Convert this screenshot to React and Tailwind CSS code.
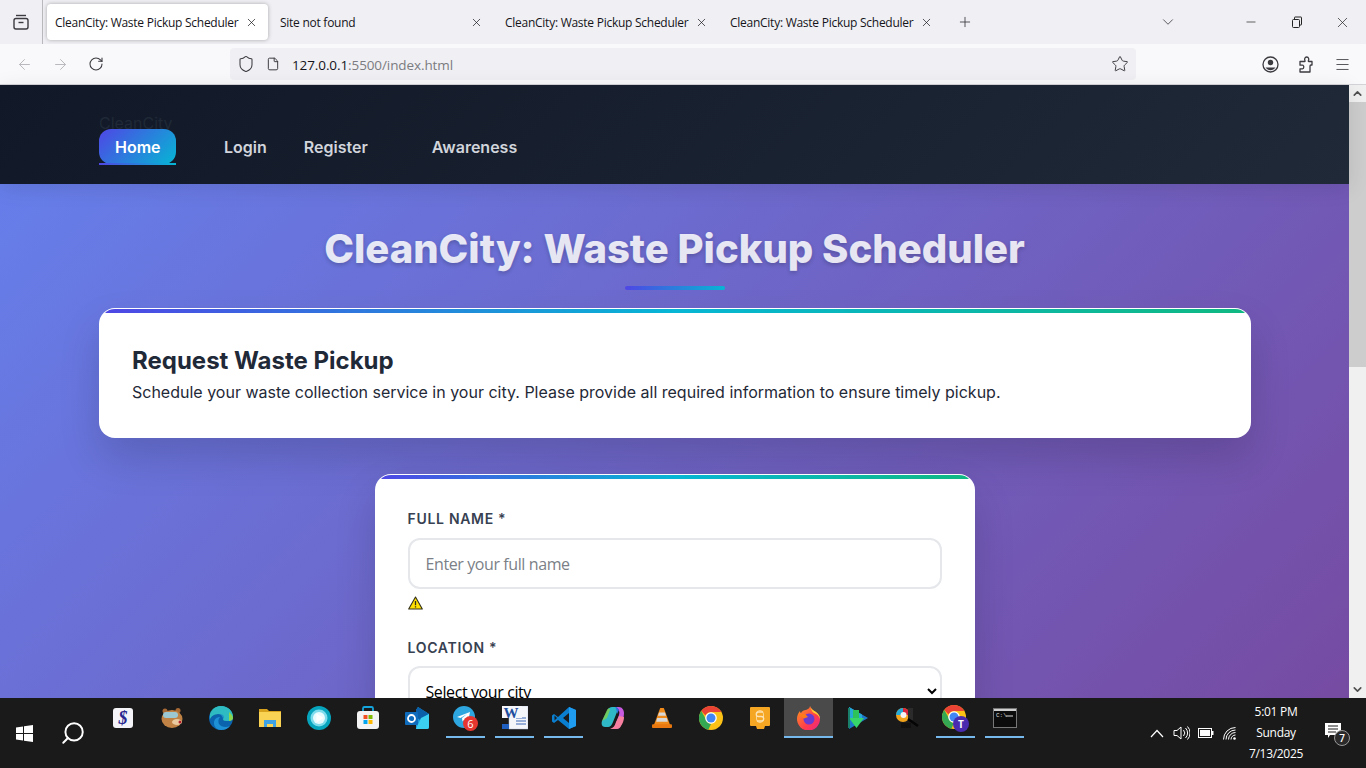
import React from "react";
import {
  ArrowLeft,
  ArrowRight,
  RotateCw,
  Shield,
  File,
  Star,
  Menu,
  X,
  Plus,
  ChevronDown,
  ChevronUp,
  Minus,
  Search,
} from "lucide-react";

const tabs = [
  { title: "CleanCity: Waste Pickup Scheduler", active: true },
  { title: "Site not found" },
  { title: "CleanCity: Waste Pickup Scheduler" },
  { title: "CleanCity: Waste Pickup Scheduler" },
];

const Tab = ({ title, active }) => (
  <div
    className={`mx-[2px] flex h-9 w-[221px] items-center justify-between rounded pl-2 pr-[10px] text-xs tracking-[-0.26px] text-[#15141a] ${
      active ? "bg-white shadow-[0_0_4px_rgba(0,0,0,0.3)]" : ""
    }`}
  >
    <span className="whitespace-nowrap pt-px">{title}</span>
    <X size={13} strokeWidth={1.3} />
  </div>
);

const TabBar = () => (
  <div className="flex h-11 shrink-0 items-center bg-[#f0f0f4]">
    <div className="flex h-11 w-[43px] shrink-0 items-center justify-center border-r border-[#b8b8bd]">
      <svg width="18" height="18" viewBox="0 0 18 18" fill="none" stroke="#3b3b40" strokeWidth="1.4">
        <path d="M4 2.5h10" />
        <rect x="2" y="5.5" width="14" height="10.5" rx="2" />
        <path d="M6.5 9.5h5" />
      </svg>
    </div>
    <div className="ml-[2px] flex items-center">
      {tabs.map((t, i) => (
        <Tab key={i} title={t.title} active={t.active} />
      ))}
    </div>
    <Plus size={16} strokeWidth={1.3} className="ml-[12px] text-[#3b3b40]" />
    <ChevronDown size={18} strokeWidth={1.1} className="ml-[186px] text-[#3b3b40]" />
    <Minus size={14} strokeWidth={1.2} className="ml-[67px] text-[#222]" />
    <svg width="12" height="12" viewBox="0 0 12 12" fill="none" stroke="#222" className="ml-[33px]">
      <rect x="1.5" y="3.5" width="7" height="8" rx="1" />
      <path d="M3.5 3.5v-2a.5.5 0 0 1 .5-.5h6a.5.5 0 0 1 .5.5v7a.5.5 0 0 1-.5.5h-1.500" />
    </svg>
    <X size={17} strokeWidth={1} className="ml-[31px] text-[#222]" />
  </div>
);

const Toolbar = () => (
  <div className="flex h-[41px] shrink-0 items-center border-b border-[#d4d4d8] bg-[#f9f9fb]">
    <ArrowLeft size={17} strokeWidth={1.4} className="ml-4 text-[#b9b9bd]" />
    <ArrowRight size={17} strokeWidth={1.4} className="ml-[19px] text-[#b9b9bd]" />
    <RotateCw size={16} strokeWidth={1.6} className="ml-[19px] text-[#3b3b40]" />
    <div className="ml-[126px] flex h-8 w-[906px] items-center rounded bg-[#f0f0f4] pl-[7px] pr-[7px]">
      <Shield size={18} strokeWidth={1.4} className="text-[#3b3b40]" />
      <File size={14} strokeWidth={1.7} className="ml-[11px] text-[#3b3b40]" />
      <span className="ml-[12px] pt-[2px] text-[13.5px] tracking-[-0.1px] text-[#15141a]">
        127.0.0.1<span className="text-[#7b7b80]">:5500/index.html</span>
      </span>
      <Star size={18} strokeWidth={1.3} className="ml-auto text-[#3b3b40]" />
    </div>
    {/* account + puzzle are firefox's own shapes, lucide's don't match */}
    <svg width="17" height="17" viewBox="0 0 17 17" className="ml-[126px]">
      <circle cx="8.500" cy="8.500" r="7.500" fill="none" stroke="#3b3b40" strokeWidth="1.300" />
      <circle cx="8.500" cy="6.500" r="2.700" fill="#3b3b40" />
      <path d="M3.500 11.500h10a6 6 0 0 1-10 0Z" fill="#3b3b40" />
    </svg>
    <svg width="17" height="17" viewBox="0 0 17 17" fill="none" stroke="#3b3b40" strokeWidth="1.300" strokeLinejoin="round" className="ml-[19px]">
      <path d="M2 5.500h4.500c.7 0 .8-.6.4-1.200C6.400 3.500 6.500 1 8.700 1s2.300 2.500 1.800 3.300c-.4.600-.3 1.200.4 1.200H14V9h-1c-.8 0-1 .5-1 1v6H2v-3.200h2.500c1.700 0 1.700-3.600 0-3.600H2Z" />
    </svg>
    <Menu size={17} strokeWidth={1.2} className="ml-[19px] text-[#3b3b40]" />
  </div>
);

const Header = () => (
  <header className="relative z-10 flex h-[99px] shrink-0 flex-col bg-[linear-gradient(135deg,#111827,#1f2937)] px-[99px] pt-[28px] font-['Inter',sans-serif] shadow-[0_4px_20px_rgba(0,0,0,0.1)]">
    <div className="text-base font-normal leading-5 text-[#1f2937]">CleanCity</div>
    <nav className="-mt-1 flex items-center pt-0 text-base font-semibold text-[#d1d5db]">
      <a className="relative h-[35px] w-[77px] rounded-xl bg-[linear-gradient(135deg,#4f46e5,#06b6d4)] pl-4 pt-[7px] leading-[23px] text-white">
        Home
        <span className="absolute -bottom-px left-0 h-[2px] w-full bg-[linear-gradient(90deg,#4f46e5,#06b6d4)]" />
      </a>
      <a className="ml-8 px-4 pt-[2px] leading-[23px]">Login</a>
      <a className="ml-[5px] px-4 pt-[2px] leading-[23px]">Register</a>
      <a className="ml-8 px-4 pt-[2px] leading-[23px]">Awareness</a>
    </nav>
  </header>
);

const GradientBar = () => (
  <div className="h-1 shrink-0 bg-[linear-gradient(90deg,#4f46e5,#06b6d4,#10b981)]" />
);

const WarningIcon = () => (
  <svg width="15" height="14" viewBox="0 0 15 14">
    <path d="M7.500 1 14.300 13H.7Z" fill="#ffe000" stroke="#33301a" strokeWidth="1.100" strokeLinejoin="round" />
    <path d="M7.500 5v4.200M7.500 10.200v1.200" stroke="#33301a" strokeWidth="1.300" />
  </svg>
);

const Main = () => (
  <main className="min-h-0 flex-1 overflow-hidden bg-[linear-gradient(135deg,#667eea_0%,#764ba2_100%)] font-['Inter',sans-serif]">
    <h1 className="mt-10 text-center text-[40px] font-extrabold leading-[50px] text-white/85 [text-shadow:0_2px_4px_rgba(0,0,0,0.2)]">
      CleanCity: Waste Pickup Scheduler
    </h1>
    <div className="mx-auto mt-3 h-1 w-[100px] rounded bg-[linear-gradient(90deg,#4f46e5,#06b6d4)]" />

    <section className="ml-[99px] mt-[18px] flex h-[130px] w-[1152px] flex-col overflow-hidden rounded-2xl border border-white/90 bg-white shadow-[0_20px_40px_rgba(0,0,0,0.15)]">
      <GradientBar />
      <div className="px-8 pt-[33px]">
        <h2 className="text-2xl font-bold leading-[30px] text-[#1f2937]">Request Waste Pickup</h2>
        <p className="mt-1 text-base leading-[24px] text-[#1f2937]">
          Schedule your waste collection service in your city. Please provide all required information to ensure timely pickup.
        </p>
      </div>
    </section>

    <section className="mx-auto mt-9 flex w-[600px] flex-col overflow-hidden rounded-2xl border border-white/90 bg-white shadow-[0_20px_40px_rgba(0,0,0,0.15)]">
      <GradientBar />
      <form className="px-8 pt-[30px]">
        <label className="block text-sm font-semibold uppercase leading-[20px] tracking-[0.7px] text-[#374151]">
          Full Name *
        </label>
        <input
          readOnly
          placeholder="Enter your full name"
          className="mt-[9px] h-[51px] w-full rounded-xl border-2 border-[#e5e7eb] bg-white px-4 font-['Open_Sans',sans-serif] text-base tracking-[-0.4px] placeholder:text-[#7b7f87]"
        />
        <div className="mt-[7px] h-[14px]">
          <WarningIcon />
        </div>
        <label className="mt-[28px] block text-sm font-semibold uppercase leading-[20px] tracking-[0.7px] text-[#374151]">
          Location *
        </label>
        <select className="mt-2 h-[51px] w-full rounded-xl border-2 border-[#e5e7eb] bg-white pl-3 pr-1 font-['Open_Sans',sans-serif] text-base tracking-[-0.4px] text-black">
          <option>Select your city</option>
        </select>
      </form>
    </section>
  </main>
);

const Scrollbar = () => (
  <div className="flex w-[17px] shrink-0 flex-col bg-[#f0f0f0]">
    <div className="flex h-[17px] items-center justify-center text-[#505050]">
      <ChevronUp size={13} strokeWidth={3} />
    </div>
    <div className="h-[265px] bg-[#cdcdcd]" />
    <div className="mt-auto flex h-[17px] items-center justify-center text-[#505050]">
      <ChevronDown size={13} strokeWidth={3} />
    </div>
  </div>
);

// taskbar logos, all on a 24 box
const logos = {
  dollar: (
    <svg width="22" height="22" viewBox="0 0 22 22">
      <rect width="20" height="20" x="1" y="1" rx="3" fill="#f4f4f8" />
      <text x="11" y="17" textAnchor="middle" fontFamily="Liberation Serif, serif" fontStyle="italic" fontWeight="700" fontSize="18" fill="#27278f">$</text>
    </svg>
  ),
  bear: (
    <svg width="24" height="22" viewBox="0 0 24 22">
      <circle cx="5" cy="4" r="2.500" fill="#a86a35" />
      <circle cx="18" cy="3.500" r="2.500" fill="#a86a35" />
      <ellipse cx="12" cy="12" rx="10.500" ry="9" fill="#c08345" />
      <rect x="3" y="5" width="15" height="6" rx="3" fill="#9cc8d4" />
      <ellipse cx="17" cy="15" rx="5" ry="3" fill="#e8c9a0" />
      <circle cx="20" cy="15" r="1.500" fill="#b3202a" />
    </svg>
  ),
  edge: (
    <svg width="24" height="24" viewBox="0 0 24 24">
      <circle cx="12" cy="12" r="12" fill="#0c63ad" />
      <path d="M1 8C3 2 8 0 12 0c7 0 12 5 12 11 0 3-3 4-6 4-3 0-4-1-4-2 2-1 1-5-3-5C6 8 3 9 1 13Z" fill="#35c1a1" />
      <path d="M24 11c0 3-3 4-6 4-3 0-4-1-4-2 0-2-2-5-5-5C5 8 2 10 .5 13 1 5 6 0 12 0c7 0 12 5 12 11Z" fill="#2ab7d8" opacity=".6" />
      <path d="M12 24c4 0 7-1.500 9-4-4 2-9 1-11-2-1-2-1-5 1-7-3 0-6 2-6 6 0 4 3 7 7 7Z" fill="#1e90d6" />
      <path d="M20 6c2 2 4 4 4 6 0 2-2 3-4 3Z" fill="#8ad64f" />
    </svg>
  ),
  folder: (
    <svg width="22" height="20" viewBox="0 0 22 20">
      <path d="M0 1h8l2 2h12v16H0Z" fill="#d9a21c" />
      <rect y="4" width="22" height="15" fill="#fbd354" />
      <path d="M5 19v-7h12v7h-3v-3H8v3Z" fill="#3fa2e4" />
    </svg>
  ),
  circle: (
    <svg width="24" height="24" viewBox="0 0 24 24">
      <circle cx="12" cy="12" r="12" fill="#06a5bd" />
      <circle cx="12" cy="12" r="8.500" fill="#7fdced" />
      <circle cx="12" cy="12" r="6" fill="#e8fbff" />
      <path d="M9.500 7.500 16.500 12l-7 4.500Z" fill="#fff" />
    </svg>
  ),
  store: (
    <svg width="24" height="24" viewBox="0 0 24 24">
      <path d="M7 6V2.500A1.500 1.500 0 0 1 8.500 1h7A1.500 1.500 0 0 1 17 2.500V6" fill="none" stroke="#14a5dc" strokeWidth="1.800" />
      <rect x="1" y="5" width="22" height="18" rx="3" fill="#f3f3f3" />
      <rect x="7.500" y="9" width="4" height="4" fill="#f25022" />
      <rect x="12.500" y="9" width="4" height="4" fill="#7fba00" />
      <rect x="7.500" y="14" width="4" height="4" fill="#00a4ef" />
      <rect x="12.500" y="14" width="4" height="4" fill="#ffb900" />
    </svg>
  ),
  outlook: (
    <svg width="24" height="24" viewBox="0 0 24 24">
      <path d="M13 1 24 8v13a2 2 0 0 1-2 2H11V4Z" fill="#1a9bdc" />
      <path d="M13 1 24 8l-9 6-4-3V4Z" fill="#0a5fa8" />
      <path d="M24 8v13a2 2 0 0 1-2 2H11l5-11Z" fill="#3bd0f2" />
      <rect x="0" y="6" width="13" height="13" rx="1" fill="#0f6cbd" />
      <circle cx="6.500" cy="12.500" r="3.500" fill="none" stroke="#fff" strokeWidth="1.800" />
    </svg>
  ),
  telegram: (
    <svg width="25" height="25" viewBox="0 0 25 25">
      <circle cx="11" cy="11" r="11" fill="#2ea6e0" />
      <path d="M4 11 17 6l-2 10-3.500-2.500-2 2-.5-3.500L14 8l-6.500 4Z" fill="#fff" />
      <circle cx="17.500" cy="17.500" r="7.500" fill="#e7362f" />
      <text x="17.500" y="21.500" textAnchor="middle" fontFamily="Open Sans, sans-serif" fontSize="11" fill="#fff">6</text>
    </svg>
  ),
  word: (
    <svg width="26" height="24" viewBox="0 0 26 24">
      <rect x="7" y="0" width="19" height="23" fill="#f4f6fa" stroke="#b4c2dc" strokeWidth=".5" />
      <path d="M14 12h10M14 15h10M14 18h10" stroke="#3a68b5" />
      <rect x="0" y="0" width="20" height="12" fill="#f4f6fa" />
      <text x="9" y="12" textAnchor="middle" fontFamily="Liberation Serif, serif" fontWeight="700" fontSize="15" fill="#1f4e9e">W</text>
      <rect x="0" y="18" width="7" height="5" fill="#1f5fbf" />
    </svg>
  ),
  vscode: (
    <svg width="24" height="24" viewBox="0 0 24 24">
      <path d="M17 1 24 4v16l-7 3-11-9-4 3-2-1.500V9.500L2 8l4 3Z" fill="#0a7fd0" />
      <path d="M17 1 24 4v16l-7 3Z" fill="#1f9cf0" />
      <path d="M17 7v10l-6-5Z" fill="#1b1b1b" />
      <path d="M2.500 9.500 5 12l-2.500 2.500Z" fill="#1b1b1b" />
    </svg>
  ),
  copilot: (
    <svg width="24" height="24" viewBox="0 0 24 24">
      <path d="M7 3c1-1 2-2 4-2h4c2 0 2 3 1 5l-4 10c-1 3-3 5-5 5H4c-3 0-4-3-3-6Z" fill="#2fb8c6" />
      <path d="M1 15 6 4c1-2 3-2 3 0L6 12Z" fill="#7ed04b" opacity=".8" />
      <path d="M15 1h3c3 0 5 3 5 6s-1 8-3 12c-1 2-2 4-5 4h-5c3-1 4-3 5-6l3-8c1-3 0-6-3-8Z" fill="#c85ae0" />
      <path d="M9 23c3-1 5-3 6-7l3-6 5 1c0 3-1 6-3 9-1 2-2 3-5 3Z" fill="#f77fa0" />
      <path d="M14 1c2 0 3 1 4 3l-2 4c0-3-1-6-2-7Z" fill="#2f6fe0" />
    </svg>
  ),
  vlc: (
    <svg width="20" height="24" viewBox="0 0 22 24">
      <path d="M9 1h4l7 19H2Z" fill="#f08a1a" />
      <path d="M7.800 6h6.400l1.200 3.500H6.600ZM5.800 12h10.400l1.300 4H4.500Z" fill="#d8d8d8" />
      <rect x="0" y="19" width="22" height="4" rx="1" fill="#e8780f" />
    </svg>
  ),
  chrome: (
    <svg width="24" height="24" viewBox="0 0 24 24">
      <circle cx="12" cy="12" r="12" fill="#fbc116" />
      <path d="M12 0a12 12 0 0 1 10.400 6H12a6 6 0 0 0-5.500 3.600L2.300 4.900A12 12 0 0 1 12 0Z" fill="#ea4335" />
      <path d="M2.300 4.900 7 13.500A6 6 0 0 0 12 18l-2.700 5.700A12 12 0 0 1 2.300 4.900Z" fill="#34a853" />
      <circle cx="12" cy="12" r="5.800" fill="#fff" />
      <circle cx="12" cy="12" r="4.500" fill="#4285f4" />
    </svg>
  ),
  sublime: (
    <svg width="22" height="24" viewBox="0 0 22 24">
      <path d="M2 1h18a1 1 0 0 1 1 1v17a1 1 0 0 1-1 1h-4l-1 3H8l-1-3H2a1 1 0 0 1-1-1V2a1 1 0 0 1 1-1Z" fill="#f5a623" />
      <path d="M14 6H9.500a2 2 0 0 0 0 4.500h3a2 2 0 0 1 0 4.500H8" fill="none" stroke="#fde3b4" strokeWidth="1.300" />
      <rect x="7.500" y="4.500" width="7" height="12" rx="3.500" fill="none" stroke="#fde3b4" strokeWidth=".8" />
    </svg>
  ),
  firefox: (
    <svg width="24" height="24" viewBox="0 0 24 24">
      <defs>
        <linearGradient id="ff" x1="0" y1="0" x2="1" y2="1">
          <stop offset="0" stopColor="#ff9a1f" />
          <stop offset=".6" stopColor="#ff3d4a" />
          <stop offset="1" stopColor="#e8208f" />
        </linearGradient>
      </defs>
      <path d="M13 0c1 3 3 4 6 6 3 2 4 5 4 7a11.500 11.500 0 0 1-23 0c0-3 1-6 3-8 0 1 .5 2 1 2 1-2 3-3 5-3 2-1 4-2 4-4Z" fill="url(#ff)" />
      <path d="M13 0c1 3 3 4 6 6 3 2 4 5 4 7-1-3-3-5-6-6-2-1-3-4-4-7Z" fill="#ffcf30" />
      <circle cx="12" cy="13" r="5.500" fill="#6a3bd1" />
      <path d="M1.500 8H8l3 3-4 1.500L3 10Z" fill="#ff7a18" />
    </svg>
  ),
  player: (
    <svg width="20" height="24" viewBox="0 0 20 24">
      <path d="M1 1 20 12 1 23Z" fill="#1e78c8" />
      <path d="M1 1 14 8.500V12H1Z" fill="#25a9d6" />
      <rect x="5" y="4" width="6" height="9" fill="#2ec25a" />
      <path d="M1 12h15l-7.500 10Z" fill="#36d66a" />
      <rect x="0" y="2" width="2" height="20" fill="#1a7f6a" />
    </svg>
  ),
  snip: (
    <svg width="24" height="24" viewBox="0 0 24 24">
      <circle cx="8" cy="9" r="7" fill="#f2a31c" />
      <path d="M8 2a7 7 0 0 1 7 7H8Z" fill="#d8243c" />
      <path d="M1 9a7 7 0 0 1 7-7v7Z" fill="#25a9d6" />
      <circle cx="8.500" cy="9" r="3" fill="#f4f4f4" />
      <rect x="13" y="2" width="5" height="12" fill="#2b2b2b" />
      <path d="M13 13l10 7" stroke="#050505" strokeWidth="2.500" />
      <rect x="6" y="17" width="10" height="5" fill="#111" />
    </svg>
  ),
  chromeT: (
    <svg width="27" height="27" viewBox="0 0 27 27">
      <circle cx="12" cy="12" r="12" fill="#fbc116" />
      <path d="M12 0a12 12 0 0 1 10.400 6H12a6 6 0 0 0-5.500 3.600L2.300 4.900A12 12 0 0 1 12 0Z" fill="#ea4335" />
      <path d="M2.300 4.900 7 13.500A6 6 0 0 0 12 18l-2.700 5.700A12 12 0 0 1 2.300 4.900Z" fill="#34a853" />
      <circle cx="12" cy="12" r="5.800" fill="#fff" />
      <circle cx="12" cy="12" r="4.500" fill="#4285f4" />
      <circle cx="19" cy="19" r="8" fill="#4a2bb0" />
      <text x="19" y="23" textAnchor="middle" fontFamily="Open Sans, sans-serif" fontWeight="700" fontSize="10" fill="#fff">T</text>
    </svg>
  ),
  terminal: (
    <svg width="24" height="20" viewBox="0 0 24 20">
      <rect x=".5" y=".5" width="23" height="19" fill="#0c0c0c" stroke="#777" />
      <rect x="1" y="1" width="22" height="2" fill="#cfcfcf" />
      <text x="3" y="9" fontFamily="Liberation Mono, monospace" fontSize="6" fill="#ddd">C:\</text>
      <path d="M13 8h7" stroke="#ddd" />
    </svg>
  ),
};

const apps = [
  { logo: "dollar" },
  { logo: "bear" },
  { logo: "edge" },
  { logo: "folder" },
  { logo: "circle" },
  { logo: "store" },
  { logo: "outlook" },
  { logo: "telegram", open: true },
  { logo: "word", open: true },
  { logo: "vscode", open: true },
  { logo: "copilot" },
  { logo: "vlc" },
  { logo: "chrome" },
  { logo: "sublime" },
  { logo: "firefox", open: true, current: true },
  { logo: "player" },
  { logo: "snip" },
  { logo: "chromeT", open: true },
  { logo: "terminal", open: true },
];

const Taskbar = () => (
  <footer className="flex h-[70px] shrink-0 bg-[#1a1a1a] font-['Open_Sans',sans-serif] text-white">
    <div className="flex h-full w-12 items-center justify-center">
      <svg width="17" height="17" viewBox="0 0 17 17" fill="#fff">
        <path d="M0 2.400 7 1.400V8H0ZM8 1.300 17 0v8H8ZM0 9h7v6.600L0 14.600ZM8 9h9v8l-9-1.300Z" />
      </svg>
    </div>
    <div className="flex h-full w-[50px] items-center justify-center">
      <Search size={26} strokeWidth={1.8} className="-scale-x-100" />
    </div>
    <div className="flex h-10 items-start">
      {apps.map((app) => (
        <div
          key={app.logo}
          className={`relative flex h-10 w-[49px] items-center justify-center ${app.current ? "bg-[#4a4a4a]" : ""}`}
        >
          {logos[app.logo]}
          {app.open && (
            <span
              className={`absolute bottom-0 h-[2px] bg-[#76b9ed] ${app.current ? "inset-x-0" : "inset-x-[5px]"}`}
            />
          )}
        </div>
      ))}
    </div>
    <div className="ml-auto flex h-full items-center">
      <svg width="14" height="9" viewBox="0 0 14 9" fill="none" stroke="#fff" strokeWidth="1.200">
        <path d="M1 8 7 1.500 13 8" />
      </svg>
      <svg width="17" height="16" viewBox="0 0 17 16" fill="none" stroke="#fff" className="ml-[9px]">
        <path d="M1 5.500h3L8 2v12l-4-3.500H1Z" />
        <path d="M10.500 5a4.500 4.500 0 0 1 0 6M12.500 3a7 7 0 0 1 0 10M14.500 1.500a9.500 9.500 0 0 1 0 13" />
      </svg>
      <svg width="16" height="10" viewBox="0 0 16 10" className="ml-[8px]">
        <rect x=".5" y=".5" width="13" height="9" fill="none" stroke="#fff" />
        <rect x="2" y="2" width="10" height="6" fill="#fff" />
        <rect x="14" y="3" width="1.500" height="4" fill="#fff" />
      </svg>
      <svg width="13" height="13" viewBox="0 0 13 13" fill="none" stroke="#fff" className="ml-[9px]">
        <path d="M.5 12.500a12 12 0 0 1 12-12M3 12.500a9.500 9.500 0 0 1 9.500-9.500M5.500 12.500a7 7 0 0 1 7-7M8 12.500A4.500 4.500 0 0 1 12.500 8" />
        <circle cx="11.500" cy="11.500" r="1.300" fill="#fff" stroke="none" />
      </svg>
      <div className="flex w-[80px] flex-col items-center gap-[4px] pb-[2px] text-xs leading-[17px] tracking-[-0.3px]">
        <span>5:01 PM</span>
        <span>Sunday</span>
        <span>7/13/2025</span>
      </div>
      <div className="relative ml-[9px] mr-6 h-[20px] w-[17px]">
        <svg width="17" height="15" viewBox="0 0 17 15">
          <path d="M0 0h16v12H5l-2 3v-3H0Z" fill="#fff" />
          <path d="M3 3h10M3 6h10M3 9h8" stroke="#1a1a1a" />
        </svg>
        <span className="absolute -bottom-[3px] -right-[8px] flex h-4 w-4 items-center justify-center rounded-full border border-[#999] bg-[#2a2a2a] text-[10px] font-semibold">
          7
        </span>
      </div>
    </div>
  </footer>
);

export default function App() {
  return (
    <div className="flex h-screen flex-col overflow-hidden font-['Open_Sans',sans-serif]">
      <TabBar />
      <Toolbar />
      <div className="flex min-h-0 flex-1">
        <div className="flex min-w-0 flex-1 flex-col">
          <Header />
          <Main />
        </div>
        <Scrollbar />
      </div>
      <Taskbar />
    </div>
  );
}
